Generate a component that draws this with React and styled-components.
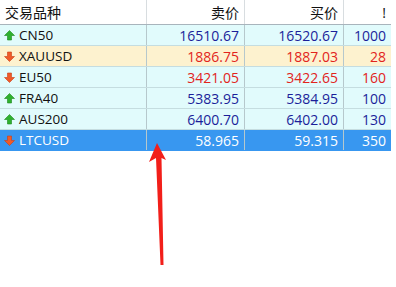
import React from 'react'
import styled, { createGlobalStyle } from 'styled-components'

const GlobalStyle = createGlobalStyle`
  html, body { margin: 0; padding: 0; background: #fff; }
  body { font-family: "Open Sans", "Noto Sans", "Noto Sans CJK SC", sans-serif; }
`

const rows = [
  { name: 'CN50', sell: '16510.67', buy: '16520.67', qty: '1000', dir: 'up', tone: 'blue' },
  { name: 'XAUUSD', sell: '1886.75', buy: '1887.03', qty: '28', dir: 'down', tone: 'red' },
  { name: 'EU50', sell: '3421.05', buy: '3422.65', qty: '160', dir: 'down', tone: 'red', bg: 'cyan' },
  { name: 'FRA40', sell: '5383.95', buy: '5384.95', qty: '100', dir: 'up', tone: 'blue' },
  { name: 'AUS200', sell: '6400.70', buy: '6402.00', qty: '130', dir: 'up', tone: 'blue' },
  { name: 'LTCUSD', sell: '58.965', buy: '59.315', qty: '350', dir: 'down', tone: 'sel' },
]

const Arrow = ({ dir }) =>
  dir === 'up' ? (
    <svg width="11" height="11" viewBox="0 0 11 11">
      <path d="M5.5 0.5 L10.5 5.5 L7.5 5.5 L7.5 10 L3.5 10 L3.5 5.5 L0.5 5.5 Z" fill="#2fb12f" stroke="#1d8a1d" strokeWidth="0.6" />
    </svg>
  ) : (
    <svg width="11" height="11" viewBox="0 0 11 11">
      <path d="M5.5 10.5 L10.5 5.5 L7.5 5.5 L7.5 1 L3.5 1 L3.5 5.5 L0.5 5.5 Z" fill="#f05a28" stroke="#c8401a" strokeWidth="0.6" />
    </svg>
  )

const App = () => {
  return (
    <Page>
      <GlobalStyle />
      <Table>
        <Header>
          <HeadCell align="left">交易品种</HeadCell>
          <HeadCell>卖价</HeadCell>
          <HeadCell>买价</HeadCell>
          <HeadCell>!</HeadCell>
        </Header>
        {rows.map((r) => {
          const bg = r.tone === 'sel' ? 'sel' : r.tone === 'red' && !r.bg ? 'yellow' : 'cyan'
          return (
            <Row key={r.name} bg={bg}>
              <NameCell tone={r.tone}>
                <Arrow dir={r.dir} />
                <span>{r.name}</span>
              </NameCell>
              <Cell tone={r.tone}>{r.sell}</Cell>
              <Cell tone={r.tone}>{r.buy}</Cell>
              <Cell tone={r.tone}>{r.qty}</Cell>
            </Row>
          )
        })}
      </Table>
      <Pointer width="30" height="130" viewBox="0 0 30 130">
        <path d="M9 0 L18 17 L13.5 15 L15.5 122 L12.5 122 L8 15 L1 19 Z" fill="#f21f1a" />
      </Pointer>
    </Page>
  )
}

const Page = styled.div`
  position: relative;
  width: 396px;
  height: 287px;
  background: #fff;
`

const Table = styled.div`
  width: 391px;
  display: flex;
  flex-direction: column;
`

const cols = '147px 98px 99px 47px'

const Header = styled.div`
  display: grid;
  grid-template-columns: ${cols};
  height: 25px;
  border-bottom: 1px solid #a8b4bc;
  box-sizing: border-box;
  background: #fff;
`

const HeadCell = styled.div`
  display: flex;
  align-items: center;
  justify-content: ${(p) => (p.align === 'left' ? 'flex-start' : 'flex-end')};
  padding-left: ${(p) => (p.align === 'left' ? '5px' : '0')};
  padding-right: ${(p) => (p.align === 'left' ? '0' : '5px')};
  border-right: 1px solid #d8dde0;
  font-size: 14px;
  color: #111;
  &:last-child { border-right: none; }
`

const bgs = { cyan: '#e1fbfc', yellow: '#fdf2cf', sel: '#3897f0' }
const tones = { blue: '#1b1f9a', red: '#e2241c', sel: '#ffffff' }

const Row = styled.div`
  display: grid;
  grid-template-columns: ${cols};
  height: 21px;
  box-sizing: border-box;
  background: ${(p) => bgs[p.bg]};
  border-bottom: 1px solid ${(p) => (p.bg === 'sel' ? '#3897f0' : '#c5dde0')};
`

const Cell = styled.div`
  display: flex;
  align-items: center;
  justify-content: flex-end;
  padding-right: 5px;
  border-right: 1px solid #b6c8cc;
  font-size: 14px;
  color: ${(p) => tones[p.tone]};
  &:last-child { border-right: none; }
`

const NameCell = styled(Cell)`
  justify-content: flex-start;
  gap: 4px;
  padding-left: 4px;
  font-size: 13.5px;
  color: ${(p) => (p.tone === 'sel' ? '#fff' : '#111')};
  svg { flex-shrink: 0; }
`

const Pointer = styled.svg`
  position: absolute;
  left: 148px;
  top: 143px;
`

export default App
